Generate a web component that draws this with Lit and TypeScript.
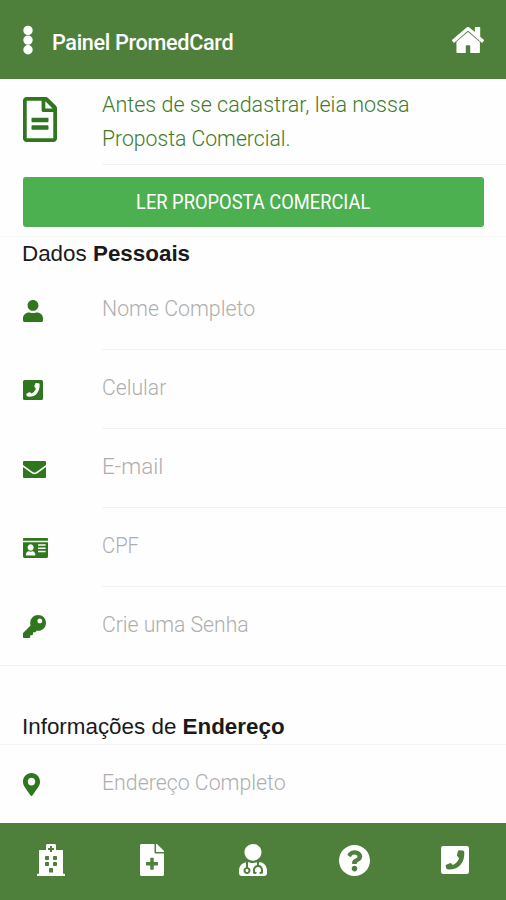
import { LitElement, html, css, svg } from "lit";
import { customElement, property } from "lit/decorators.js";

type Icon = { box: string; d: string };

const ICONS: Record<string, Icon> = {
  dots: { box: "0 0 10 30", d: "M5 .7a4.7 4.7 0 1 0 0 9.400a4.700 4.700 0 1 0 0-9.400zM5 10.400a4.700 4.700 0 1 0 0 9.400a4.700 4.700 0 1 0 0-9.400zM5 20.100a4.700 4.700 0 1 0 0 9.400a4.700 4.700 0 1 0 0-9.400z" },
  home: { box: "0 32 576 448", d: "M280 124L80 288V466a14 14 0 0 0 14 14H240a8 8 0 0 0 8-8V362a14 14 0 0 1 14-14h52a14 14 0 0 1 14 14v110a8 8 0 0 0 8 8H488a14 14 0 0 0 14-14V292L296 124a12.190 12.190 0 0 0-16 0zM571.600 251.470L508 198V44.050a12 12 0 0 0-12-12h-72a12 12 0 0 0-12 12v72.610L318.470 43a48 48 0 0 0-61 0L4.340 251.470a12 12 0 0 0-1.600 16.900l25.500 31A12 12 0 0 0 45.150 301l235.220-200a12.190 12.190 0 0 1 15.300 0L530.900 301a12 12 0 0 0 16.900-1.600l25.500-31a12 12 0 0 0-1.700-16.930z" },
  doc: { box: "0 0 384 512", d: "M288 248v28c0 6.600-5.400 12-12 12H108c-6.600 0-12-5.400-12-12v-28c0-6.600 5.400-12 12-12h168c6.600 0 12 5.400 12 12zm-12 72H108c-6.600 0-12 5.400-12 12v28c0 6.600 5.400 12 12 12h168c6.600 0 12-5.400 12-12v-28c0-6.600-5.400-12-12-12zm108-188.100V472c0 22-18 40-40 40H40c-22 0-40-18-40-40V40C0 18 18 0 40 0h212.100C264.800 0 277 5.100 286 14.100L369.900 98c9 8.900 14.100 21.200 14.100 33.900zm-132-84V132h82L252 47.900zM342 470V172H232c-13.300 0-22-10.700-22-24V42H42v428h300z" },
  user: { box: "0 0 448 512", d: "M224 250c68 0 122-56 122-124S292 0 224 0 102 56 102 126s54 124 122 124zm89.600 38h-16.700c-22.200 10.200-46.900 16-72.900 16s-50.600-5.800-72.900-16h-16.700C60.200 288 0 348.200 0 422.400V476c0 20 16 36 36 36h376c20 0 36-16 36-36v-53.600c0-74.200-60.200-134.400-134.400-134.400z" },
  phone: { box: "0 32 448 448", d: "M412 32H36A36 36 0 0 0 0 68v376a36 36 0 0 0 36 36h376a36 36 0 0 0 36-36V68a36 36 0 0 0-36-36zM75 352Q72 338 84 332L140 306Q156 300 166 312L190 334Q262 300 290 228L262 194Q252 184 256 168L272 112Q278 98 294 98L350 104Q368 108 372 124Q380 260 312 332Q250 404 150 408Q92 408 82 384z" },
  mail: { box: "0 64 512 384", d: "M20 64H492Q512 64 512 84V152L296 312Q256 338 216 312L0 152V84Q0 64 20 64zM0 202L200 348Q256 384 312 348L512 202V428Q512 448 492 448H20Q0 448 0 428z" },
  card: { box: "0 32 576 448", d: "M552 32H24C10 32 0 42 0 56v40h576V56c0-14-10-24-24-24zM0 448c0 18 14 32 32 32h512c18 0 32-14 32-32V128H0v320zm346-276h176v36H346v-36zm0 72h176v36H346v-36zm0 72h176v36H346v-36zM176 172c38 0 70 30 70 70s-32 72-70 72-70-32-70-72 32-70 70-70zM67.100 400C72 360 99.600 330 128 330h8.200c12.300 5.100 25.700 8 39.800 8s27.600-2.900 39.800-8h8.200c28.400 0 56 30 60.900 70 3.200 9.900-5.200 24-15.600 24H82.700c-10.400 0-18.800-14-15.600-24z" },
  key: { box: "0 0 512 512", d: "M512 176.001C512 273.203 433.202 352 336 352c-11.220 0-22.190-1.062-32.827-3.069l-24.012 27.014A23.999 23.999 0 0 1 261.223 384H224v40c0 13.255-10.745 24-24 24h-40v40c0 13.255-10.745 24-24 24H24c-13.255 0-24-10.745-24-24v-78.059c0-6.365 2.529-12.470 7.029-16.971l161.802-161.802C163.108 213.814 160 195.271 160 176 160 78.798 238.797.001 335.999 0 433.488-.001 512 78.511 512 176.001zM320 132c0 30 24 54 54 54s54-24 54-54-24-54-54-54-54 24-54 54z" },
  pin: { box: "0 0 384 512", d: "M172.268 501.670C26.970 291.031 0 269.413 0 192 0 85.961 85.961 0 192 0s192 85.961 192 192c0 77.413-26.970 99.031-172.268 309.670-9.535 13.774-29.930 13.773-39.464 0zM192 276c46 0 84-38 84-84s-38-84-84-84-84 38-84 84 38 84 84 84z" },
  hospital: { box: "0 0 448 512", d: "M448 486v26H0v-26c0-6.600 5.400-12 12-12h20V112c0-9 7-16 16-16h96V24c0-13.300 10.700-24 24-24h112c13.300 0 24 10.700 24 24v72h96c9 0 16 7 16 16v362h20c6.600 0 12 5.400 12 12zM308 192h-40c-6.600 0-12 5.400-12 12v40c0 6.600 5.400 12 12 12h40c6.600 0 12-5.400 12-12v-40c0-6.600-5.400-12-12-12zm-168 64h40c6.600 0 12-5.400 12-12v-40c0-6.600-5.400-12-12-12h-40c-6.600 0-12 5.400-12 12v40c0 6.600 5.400 12 12 12zm104 128h-40c-6.600 0-12 5.400-12 12v60h64v-60c0-6.600-5.400-12-12-12zm64-96h-40c-6.600 0-12 5.400-12 12v40c0 6.600 5.400 12 12 12h40c6.600 0 12-5.400 12-12v-40c0-6.600-5.400-12-12-12zm-116 52v-40c0-6.600-5.400-12-12-12h-40c-6.600 0-12 5.400-12 12v40c0 6.600 5.400 12 12 12h40c6.600 0 12-5.400 12-12zM182 96h26v26c0 3.300 2.700 6 6 6h20c3.300 0 6-2.700 6-6V96h26c3.300 0 6-2.700 6-6V70c0-3.300-2.700-6-6-6h-26V38c0-3.300-2.700-6-6-6h-20c-3.300 0-6 2.700-6 6v26h-26c-3.300 0-6 2.700-6 6v20c0 3.300 2.700 6 6 6z" },
  file: { box: "0 0 384 512", d: "M377 105L279.100 7c-4.500-4.500-10.600-7-17-7H256v128h128v-6.100c0-6.300-2.500-12.400-7-16.900zm-145 31V0H24C10.700 0 0 10.700 0 24v464c0 13.300 10.700 24 24 24h336c13.300 0 24-10.700 24-24V152H248c-10 0-16-6-16-16zm56 160v40c0 4.400-3.600 8-8 8h-60v60c0 4.400-3.600 8-8 8h-40c-4.400 0-8-3.600-8-8v-60h-60c-4.400 0-8-3.600-8-8v-40c0-4.400 3.600-8 8-8h60v-60c0-4.400 3.600-8 8-8h40c4.400 0 8 3.600 8 8v60h60c4.400 0 8 3.600 8 8z" },
  doctor: { box: "0 0 448 512", d: "M224 266c76 0 136-60 136-134S300 0 224 0 88 58 88 132s60 134 136 134zM104 424c0 13.300 10.700 24 24 24s24-10.700 24-24-10.700-24-24-24-24 10.700-24 24zm216-135.400v49c36.500 7.400 64 39.800 64 78.400v41.700c0 7.600-5.400 14.200-12.900 15.700l-32.200 6.400c-4.300.9-8.500-1.900-9.400-6.300l-3.100-15.700c-.9-4.300 1.900-8.600 6.300-9.400l19.300-3.900V416c0-62.800-96-65.100-96 1.900v26.700l19.300 3.900c4.300.9 7.100 5.100 6.300 9.400l-3.100 15.700c-.9 4.300-5.100 7.100-9.400 6.300l-31.200-4.200c-7.900-1.100-13.800-7.800-13.800-15.900V416c0-38.600 27.500-70.900 64-78.400v-45.200c-2.200.7-4.400 1.100-6.600 1.900-18 6.300-37.300 9.800-57.400 9.800s-39.400-3.500-57.400-9.800c-7.400-2.600-14.900-4.200-22.600-5.200v81.600c23.100 6.900 40 28.100 40 53.400 0 30.900-25.100 56-56 56s-56-25.100-56-56c0-25.300 16.900-46.500 40-53.400v-80.400C48.500 301 0 355.800 0 422.400v44.800C0 491.900 20.100 512 44.800 512h358.400c24.700 0 44.800-20.100 44.800-44.800v-44.800c0-72-56.800-130.300-128-133.800z" },
  help: { box: "8 8 496 496", d: "M504 256c0 136.997-111.043 248-248 248S8 392.997 8 256C8 119.083 119.043 8 256 8s248 111.083 248 248zM262.655 90c-54.497 0-89.255 22.957-116.549 63.758-3.536 5.286-2.353 12.415 2.715 16.258l34.699 26.310c5.205 3.947 12.621 3.008 16.665-2.122 17.864-22.658 30.113-35.797 57.303-35.797 20.429 0 45.698 13.148 45.698 32.958 0 14.976-12.363 22.667-32.534 33.976C247.128 238.528 216 254.941 216 296v4c0 6.627 5.373 12 12 12h56c6.627 0 12-5.373 12-12v-1.333c0-28.462 83.186-29.647 83.186-106.667 0-58.002-60.165-102-116.531-102zM256 338c-25.365 0-46 20.635-46 46 0 25.364 20.635 46 46 46s46-20.636 46-46c0-25.365-20.635-46-46-46z" },
};

@customElement("app-icon")
export class AppIcon extends LitElement {
  static styles = css`
    :host { display: block; flex: none; }
    svg { display: block; width: 100%; height: 100%; fill: currentColor; }
  `;
  @property() name = "user";
  render() {
    const icon = ICONS[this.name];
    return html`<svg viewBox=${icon.box} preserveAspectRatio="none" aria-hidden="true">${svg`<path fill-rule="evenodd" d=${icon.d}></path>`}</svg>`;
  }
}

const FIELDS = [
  { icon: "user", label: "Nome Completo", key: "nome" },
  { icon: "phone", label: "Celular", key: "celular" },
  { icon: "mail", label: "E-mail", key: "email" },
  { icon: "card", label: "CPF", key: "cpf" },
  { icon: "key", label: "Crie uma Senha", key: "senha" },
];

@customElement("app-root")
export class AppRoot extends LitElement {
  static styles = css`
    * { box-sizing: border-box; }
    :host {
      display: flex; flex-direction: column; height: 900px; overflow: hidden;
      background: #fefefe; font-family: Roboto, "Open Sans", sans-serif; white-space: nowrap;
    }
    .bar { flex: none; height: 79px; background: #4e803c; color: #fff; display: flex; align-items: center; padding: 0 22px 0 23px; }
    .dots { width: 10px; height: 30px; }
    .title { flex: 1; margin: 4px 0 0 19px; font-size: 22.500px; line-height: 30px; font-weight: 500; }
    .title span, .pitch span, .field span, .cta span { display: inline-block; transform-origin: left center; }
    .title span { letter-spacing: -0.350px; transform: scaleX(0.962); }
    .home { width: 32px; height: 26px; }
    .content { flex: 1; min-height: 0; overflow: hidden; }
    .intro { display: flex; height: 86px; color: #3f7a2a; }
    .lead { flex: none; width: 102px; padding-left: 23px; }
    .intro .lead { padding-top: 18px; color: #2f761f; }
    .doc { width: 34px; height: 45px; }
    .pitch { flex: 1; border-bottom: 1px solid #f1f1f1; padding-top: 8px; font-size: 22.500px; line-height: 34px; font-weight: 300; }
    .pitch .l1 { transform: scaleX(0.956); }
    .pitch .l2 { transform: scaleX(0.941); }
    .cta { height: 72px; padding: 12px 22px 10px 23px; border-bottom: 1px solid #f8f8f8; }
    .cta button {
      display: flex; align-items: center; justify-content: center; width: 461px; height: 50px; padding: 0; border: 0; border-radius: 3px;
      background: #4caf50; color: #fff; font: 400 20.500px/50px Roboto, sans-serif;
    }
    .cta span { transform-origin: center; transform: scaleX(0.893); }
    .heading { margin: 0; padding-left: 22px; font: 400 22.400px/34px "Liberation Sans", sans-serif; color: #1a1a1a; }
    .first { height: 34px; }
    .second { height: 79px; padding-top: 44px; border-bottom: 1px solid #f3f3f3; }
    .row { display: flex; height: 79px; color: #2f761f; }
    .row .lead { display: flex; align-items: center; padding-top: 1px; }
    .field { flex: 1; border-bottom: 1px solid #f1f1f1; color: #aeaeae; font-size: 22.500px; line-height: 75px; font-weight: 300; }
    .field .t-nome, .field .t-endereco { transform: scaleX(0.947); }
    .field .t-celular, .field .t-senha { transform: scaleX(0.94); }
    .field .t-cpf { transform: scaleX(0.9); }
    .last { border-bottom: 1px solid #f1f1f1; }
    .last .field { border-bottom: 0; }
    .user { width: 20px; height: 22px; }
    .phone { width: 20px; height: 20px; }
    .mail { width: 23px; height: 17px; }
    .card { width: 25px; height: 20px; }
    .key { width: 23px; height: 23px; }
    .pin { width: 17px; height: 23px; }
    nav { flex: none; height: 77px; background: #4e803c; color: #fff; display: grid; grid-template-columns: repeat(5, 1fr); justify-items: center; align-items: center; padding-bottom: 3px; }
    .n-hospital, .n-doctor { width: 28px; height: 32px; }
    .n-file { width: 24px; height: 32px; }
    .n-help { width: 31px; height: 31px; }
    .n-phone { width: 28px; height: 28px; }
  `;

  private row(icon: string, label: string, key: string, last = false) {
    return html`<div class="row ${last ? "last" : ""}">
      <div class="lead"><app-icon class=${icon} name=${icon}></app-icon></div>
      <div class="field"><span class="t-${key}">${label}</span></div>
    </div>`;
  }

  render() {
    return html`
      <header class="bar">
        <app-icon class="dots" name="dots"></app-icon>
        <div class="title"><span>Painel PromedCard</span></div>
        <app-icon class="home" name="home"></app-icon>
      </header>
      <main class="content">
        <div class="intro">
          <div class="lead"><app-icon class="doc" name="doc"></app-icon></div>
          <div class="pitch"><span class="l1">Antes de se cadastrar, leia nossa</span><br /><span class="l2">Proposta Comercial.</span></div>
        </div>
        <div class="cta"><button><span>LER PROPOSTA COMERCIAL</span></button></div>
        <h2 class="heading first">Dados <b>Pessoais</b></h2>
        ${FIELDS.map((f, i) => this.row(f.icon, f.label, f.key, i === FIELDS.length - 1))}
        <h2 class="heading second">Informações de <b>Endereço</b></h2>
        ${this.row("pin", "Endereço Completo", "endereco", true)}
      </main>
      <nav>
        ${["hospital", "file", "doctor", "help", "phone"].map((n) => html`<app-icon class="n-${n}" name=${n}></app-icon>`)}
      </nav>
    `;
  }
}
